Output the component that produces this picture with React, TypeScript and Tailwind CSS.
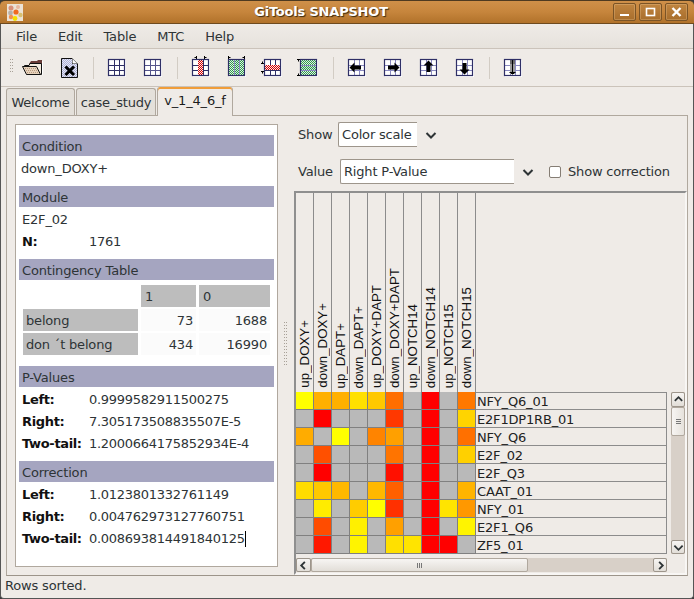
import React from "react";

const NAVY = "#2f2f66";

function Grid({ children, inner = NAVY }: { children?: React.ReactNode; inner?: string }) {
  return (
    <svg width="18" height="18" viewBox="0 0 18 18" className="overflow-visible">
      <rect x="1" y="1" width="17" height="17" fill="#ffffff" />
      <rect x="0.5" y="0.5" width="16" height="16" fill="#ffffff" />
      <path d="M6.5 1V16M11.5 1V16M1 6.5H16M1 11.5H16" stroke={inner} strokeWidth="1" />
      {children}
      <rect x="0.5" y="0.5" width="16" height="16" fill="none" stroke={NAVY} strokeWidth="1.2" />
    </svg>
  );
}

function Checker({ x, y, w, h, c1, c2 }: { x: number; y: number; w: number; h: number; c1: string; c2: string }) {
  const cells: React.ReactNode[] = [];
  for (let i = 0; i < w; i++)
    for (let j = 0; j < h; j++)
      cells.push(<rect key={i + "-" + j} x={x + i} y={y + j} width="1" height="1" fill={(i + j) % 2 ? c1 : c2} />);
  return <>{cells}</>;
}

function ArrowIcon({ dir }: { dir: "l" | "r" | "u" | "d" }) {
  const p = {
    l: "M1.5 8.5L6.5 3.5V6.5H13V10.5H6.5V13.5Z",
    r: "M15.5 8.5L10.5 3.5V6.5H4V10.5H10.5V13.5Z",
    u: "M8.5 1.5L3.5 6.5H6.5V13H10.5V6.5H13.5Z",
    d: "M8.5 15.5L3.5 10.5H6.5V4H10.5V10.5H13.5Z",
  }[dir];
  return (
    <Grid inner="#8a8ac0">
      <path d={p} fill="#000" />
    </Grid>
  );
}

const toolIcons1 = (
  <svg width="22" height="18" viewBox="0 0 22 18">
    <path d="M7 5L9 2H15L16 1H20V15H17Z" fill="#6a3c38" />
    <path d="M2.5 6.5H7L8 4.5H19.5V15.5H5Z" fill="#f4ece0" stroke="#111" strokeWidth="1" />
    <path d="M0.5 7.5H14.5L18.5 15.5H4.5Z" fill="#e6d2bc" stroke="#111" strokeWidth="1" />
    <path d="M3 9.5L15 9.5M4 11.5L16 11.5M5 13.5L17 13.5" stroke="#b89a80" strokeDasharray="1 1" />
    <path d="M20.5 2V16" stroke="#fff" />
  </svg>
);

const toolIcons2 = (
  <svg width="17" height="20" viewBox="0 0 17 20">
    <path d="M0.5 0.5H11L16.5 6V19.5H0.5Z" fill="#c5c8e4" stroke="#111" />
    <path d="M11 0.5V6H16.5" fill="#fff" stroke="#111" />
    <Checker x={1} y={1} w={10} h={18} c1="#e4e6f6" c2="#aeb0d4" />
    <Checker x={11} y={6} w={5} h={13} c1="#e4e6f6" c2="#aeb0d4" />
    <path d="M4.5 8.5L13 17M13 8.5L4.5 17" stroke="#000" strokeWidth="3" />
  </svg>
);

const Btn = ({ children }: { children: React.ReactNode }) => (
  <div className="w-9 h-9 flex items-center justify-center shrink-0">{children}</div>
);
const Sep = () => (
  <div className="w-3 flex justify-center shrink-0">
    <div className="w-px h-[22px] bg-[#d2ccc4]" />
  </div>
);

function Chevron({ dir = "d", size = 12, width = 2 }: { dir?: "d" | "u" | "l" | "r"; size?: number; width?: number }) {
  const d = { d: "M1.5 4L6 8.5L10.5 4", u: "M2 7.5L6 3.5L10 7.5", l: "M7.5 2L3.5 6L7.5 10", r: "M4.5 2L8.5 6L4.5 10" }[dir];
  return (
    <svg width={size} height={size} viewBox="0 0 12 12">
      <path d={d} fill="none" stroke="#2e3436" strokeWidth={width} />
    </svg>
  );
}

function Section({ title, first, children }: { title: string; first?: boolean; children: React.ReactNode }) {
  return (
    <div className={first ? "" : "mt-[7px]"}>
      <div className="h-[21px] leading-[23px] bg-[#a5a5c0] px-[3px] text-[#2e3436]">{title}</div>
      {children}
    </div>
  );
}

function KV({ k, v, caret }: { k: string; v?: string; caret?: boolean }) {
  return (
    <div className="h-[22px] pt-px flex items-center px-[3px]">
      <div className="w-[67px] font-bold shrink-0 text-[#111] tracking-[-0.35px]">{k}</div>
      <div className="flex items-center tracking-[-0.28px]">
        {v}
        {caret && <span className="inline-block w-px h-[16px] bg-black" />}
      </div>
    </div>
  );
}

const G = "#b9b9b9";
const R = "#ff0000";
const rows: [string, string[]][] = [
  ["NFY_Q6_01", ["#ffff00", "#ffb000", "#ffb000", "#ffe000", "#ffc800", "#ff6e00", G, R, G, "#ff7800"]],
  ["E2F1DP1RB_01", [G, R, G, G, G, "#ff3800", G, R, G, "#ffd400"]],
  ["NFY_Q6", ["#ffac00", G, "#ffff00", G, "#ff8400", "#ffa000", G, R, G, "#ff7000"]],
  ["E2F_02", [G, "#ff5000", G, G, G, "#ff7400", G, R, G, "#ffd000"]],
  ["E2F_Q3", [G, R, G, G, G, "#ff1000", G, R, G, G]],
  ["CAAT_01", ["#ffdc00", "#ffc800", "#ffb800", G, "#ffb800", "#ff6000", G, R, G, "#ffb400"]],
  ["NFY_01", [G, "#ffec00", G, "#ffcc00", "#ffff00", "#ff3000", G, R, "#ffe400", "#ff9800"]],
  ["E2F1_Q6", [G, "#ff4c00", G, "#fff000", G, "#ffa000", G, R, G, "#fff400"]],
  ["ZF5_01", [G, "#ff1800", G, "#fff400", G, "#ffe000", "#ffe400", R, R, G]],
];
const cols = ["up_DOXY+", "down_DOXY+", "up_DAPT+", "down_DAPT+", "up_DOXY+DAPT", "down_DOXY+DAPT", "up_NOTCH14", "down_NOTCH14", "up_NOTCH15", "down_NOTCH15"];

const Dots = ({ w, h }: { w: number; h: number }) => (
  <svg width={w} height={h} viewBox={`0 0 ${w} ${h}`}>
    {Array.from({ length: Math.floor(h / 3) }).flatMap((_, j) =>
      Array.from({ length: Math.floor(w / 2) }).map((_, i) => (
        <rect key={i + "-" + j} x={i * 2} y={j * 3} width="1" height="1" fill="#a8a198" />
      ))
    )}
  </svg>
);

const ScrollBtn = ({ children, cls }: { children: React.ReactNode; cls: string }) => (
  <div className={"flex items-center justify-center bg-gradient-to-b from-[#f7f5f3] to-[#e2ded8] border border-[#9d958b] rounded-[2px] shrink-0 " + cls}>
    {children}
  </div>
);

const TICK = "#000";

export default function App() {
  return (
    <div className="w-[694px] h-[599px] flex flex-col overflow-hidden bg-[#3a3a3a] text-[13px] tracking-[-0.18px] text-[#2e3436] [font-family:'DejaVu_Sans',sans-serif]">
      {/* title bar */}
      <div className="h-[24px] shrink-0 rounded-t-[5px] border-t border-[#4e3a20] border-b border-b-[#6e4a1e] bg-gradient-to-b from-[#cf9049] via-[#c6853c] to-[#b1722a] flex items-center pl-[7px] pr-[6px]">
        <svg width="16" height="17" viewBox="0 0 16 17" className="shrink-0">
          <rect width="16" height="17" fill="#ece3d6" />
          <circle cx="4" cy="4" r="2.5" fill="#d8907a" />
          <circle cx="11" cy="3" r="2" fill="#e8b8a0" />
          <circle cx="3.5" cy="9" r="2.4" fill="#b8b0a8" />
          <circle cx="9" cy="8" r="2.6" fill="#f06a20" />
          <circle cx="13.5" cy="11" r="2.2" fill="#d8c070" />
          <circle cx="4" cy="13" r="2.2" fill="#f09050" />
          <circle cx="8" cy="14.5" r="2.4" fill="#f4e000" />
        </svg>
        <div className="flex-1 text-center text-white font-bold text-[13px] tracking-[-0.2px] [text-shadow:1px_1px_1px_#3a2a10] pl-[6px]">GiTools SNAPSHOT</div>
        <div className="flex gap-[3px]">
          {[
            <path key="a" d="M7 12H16" stroke="#fff" strokeWidth="2" />,
            <rect key="b" x="7.5" y="5.5" width="8" height="7" fill="none" stroke="#fff" strokeWidth="1.6" />,
            <path key="c" d="M7.5 5L15.5 13M15.5 5L7.5 13" stroke="#fff" strokeWidth="2.4" />,
          ].map((c, i) => (
            <div key={i} className="w-[23px] h-[18px] rounded-[2px] border border-[#7b5426] bg-gradient-to-b from-[#c08540] to-[#a86e2c] shadow-[inset_0_0_0_1px_rgba(255,220,170,0.25)]">
              <svg width="21" height="16" viewBox="1 1 21 16">{c}</svg>
            </div>
          ))}
        </div>
      </div>

      <div className="flex-1 min-h-0 flex flex-col bg-[#efebe7] border-x border-[#555] rounded-b-[4px] border-b">
        {/* menu */}
        <div className="h-[25px] shrink-0 bg-gradient-to-b from-[#efebe7] to-[#e6e2dc] border-b border-[#cbc3ba] flex items-center gap-[21px] pl-[15px] pt-[1px] pr-[2px]">
          <span>File</span>
          <span>Edit</span>
          <span>Table</span>
          <span>MTC</span>
          <span>Help</span>
        </div>

        {/* toolbar */}
        <div className="h-[38px] shrink-0 border-b border-[#cbc3ba] flex items-center pl-[5px]">
          <div className="w-[9px] flex justify-center shrink-0 pl-[3px]"><Dots w={5} h={17} /></div>
          <Btn>{toolIcons1}</Btn>
          <Btn>{toolIcons2}</Btn>
          <Sep />
          <Btn><Grid /></Btn>
          <Btn><Grid inner="#55558c" /></Btn>
          <Sep />
          <Btn>
            <Grid inner={NAVY}>
              <Checker x={6} y={1} w={5} h={15} c1="#d40000" c2="#fbe8e8" />
              <path d="M4.5 -3V0M2.5 -1.5H4.5M12.5 -3V0M12.5 -1.5H14.5" stroke={TICK} />
            </Grid>
          </Btn>
          <Btn>
            <Grid inner="#8a8ac0">
              <Checker x={1} y={1} w={5} h={15} c1="#2f9a50" c2="#e2f2e2" />
              <Checker x={7} y={1} w={4} h={15} c1="#2f9a50" c2="#cfe6d8" />
              <Checker x={12} y={1} w={4} h={15} c1="#2f9a50" c2="#e2f2e2" />
              <path d="M0.5 -3V0M0.5 -1.5H2.5M16.5 -3V0M14.5 -1.5H16.5" stroke={TICK} />
            </Grid>
          </Btn>
          <Btn>
            <Grid inner={NAVY}>
              <Checker x={1} y={6} w={15} h={5} c1="#d40000" c2="#fbe8e8" />
              <path d="M-3 4.5H0M-1.5 2.5V4.5M-3 12.5H0M-1.5 12.5V14.5" stroke={TICK} />
            </Grid>
          </Btn>
          <Btn>
            <Grid inner="#8a8ac0">
              <Checker x={1} y={1} w={15} h={5} c1="#2f9a50" c2="#e2f2e2" />
              <Checker x={1} y={7} w={15} h={4} c1="#2f9a50" c2="#cfe6d8" />
              <Checker x={1} y={12} w={15} h={4} c1="#2f9a50" c2="#e2f2e2" />
              <path d="M-3 0.5H0M-1.5 0.5V2.5M-3 16.5H0M-1.5 14.5V16.5" stroke={TICK} />
            </Grid>
          </Btn>
          <Sep />
          <Btn><ArrowIcon dir="l" /></Btn>
          <Btn><ArrowIcon dir="r" /></Btn>
          <Btn><ArrowIcon dir="u" /></Btn>
          <Btn><ArrowIcon dir="d" /></Btn>
          <Sep />
          <Btn>
            <Grid inner="#8a8ac0">
              <rect x="6" y="1" width="5" height="14" fill="#9a9a9a" />
              <rect x="6" y="1" width="5" height="4" fill="#6a6a6a" />
              <path d="M8.5 1V15.5M5.5 13.5H11.5M7 14.5H10" stroke="#000" fill="none" />
            </Grid>
          </Btn>
        </div>

        {/* tabs */}
        <div className="h-[28px] shrink-0 flex items-end pl-[5px] gap-[2px] relative z-10">
          <div className="w-[69px] h-[27px] pt-px flex items-center justify-center bg-[#e4e0da] border border-b-0 border-[#b0a89e] rounded-t-[3px]">Welcome</div>
          <div className="w-[80px] h-[27px] pt-px flex items-center justify-center bg-[#e4e0da] border border-b-0 border-[#b0a89e] rounded-t-[3px] -ml-px">case_study</div>
          <div className="w-[76px] h-[29px] -mb-px -ml-[1px] pb-[2px] flex items-center justify-center bg-[#efebe7] border border-t-0 border-b-0 border-[#b0a89e] rounded-t-[3px] shadow-[inset_0_2px_0_#f09d3a] text-[#1a1a1a]">v_1_4_6_f</div>
        </div>

        {/* tab content */}
        <div className="h-[461px] shrink-0 mx-[5px] border border-[#b0a89e] border-b-[#9c948a] flex">
          {/* left */}
          <div className="w-[263px] h-[443px] ml-2 mt-2 shrink-0 bg-white border border-[#b0a89e] pt-[10px] px-[3px]">
            <Section title="Condition" first>
              <div className="h-[22px] mt-px pt-px flex items-center px-[2px]">down_DOXY+</div>
            </Section>
            <Section title="Module">
              <div className="mt-px">
                <div className="h-[22px] pt-px flex items-center px-[3px]">E2F_02</div>
                <KV k="N:" v="1761" />
              </div>
            </Section>
            <Section title="Contingency Table">
              <div className="pt-[5px] pb-[4px] ml-[4px] grid grid-cols-[115px_55px_71px] gap-x-[3px] gap-y-[2px] auto-rows-[22px] items-stretch leading-[24px]">
                <div />
                <div className="bg-[#bdbdbd] px-[4px]">1</div>
                <div className="bg-[#bdbdbd] px-[4px]">0</div>
                <div className="bg-[#bdbdbd] px-[3px]">belong</div>
                <div className="bg-[#fbfbfb] px-[3px] text-right">73</div>
                <div className="bg-[#fbfbfb] px-[3px] text-right">1688</div>
                <div className="bg-[#bdbdbd] px-[3px]">don ´t belong</div>
                <div className="bg-[#fbfbfb] px-[3px] text-right">434</div>
                <div className="bg-[#fbfbfb] px-[3px] text-right">16990</div>
              </div>
            </Section>
            <Section title="P-Values">
              <div className="mt-px">
                <KV k="Left:" v="0.9999582911500275" />
                <KV k="Right:" v="7.305173508835507E-5" />
                <KV k="Two-tail:" v="1.2000664175852934E-4" />
              </div>
            </Section>
            <Section title="Correction">
              <div className="mt-px">
                <KV k="Left:" v="1.0123801332761149" />
                <KV k="Right:" v="0.004762973127760751" />
                <KV k="Two-tail:" v="0.008693814491840125" caret />
              </div>
            </Section>
          </div>

          {/* splitter */}
          <div className="w-[16px] shrink-0 flex items-center justify-center pt-[8px] pb-[10px]">
            <Dots w={5} h={46} />
          </div>

          {/* right */}
          <div className="flex-1 min-w-0 flex flex-col">
            <div className="h-[75px] shrink-0 pl-[4px]">
              <div className="h-[25px] mt-[6px] flex items-center">
                <span className="w-[40px]">Show</span>
                <div className="w-[79px] h-[25px] bg-white border border-r-0 border-[#9d958b] rounded-l-[2px] flex items-center pl-[3px]">Color scale</div>
                <div className="w-[28px] flex justify-center"><Chevron /></div>
              </div>
              <div className="h-[25px] mt-[12px] flex items-center">
                <span className="w-[42px]">Value</span>
                <div className="w-[174px] h-[25px] bg-white border border-r-0 border-[#9d958b] rounded-l-[2px] flex items-center pl-[3px]">Right P-Value</div>
                <div className="w-[28px] flex justify-center"><Chevron /></div>
                <div className="w-[12px] h-[12px] ml-[7px] bg-white border border-[#857d74] rounded-[2px]" />
                <span className="ml-[7px]">Show correction</span>
              </div>
            </div>

            {/* matrix */}
            <div className="flex-1 min-h-0 border-2 border-[#8f8f8f] border-r-[#f8f6f4] border-b-[#f8f6f4] flex flex-col">
              <div className="h-[199px] shrink-0 flex">
                {cols.map((c) => (
                  <div key={c} className="w-[18px] border-r border-[#8c8c8c] flex items-end justify-center pb-[4px]">
                    <span className="[writing-mode:vertical-rl] rotate-180 whitespace-nowrap [font-family:'Liberation_Sans',sans-serif] text-[13.3px] tracking-normal leading-[16px] text-[#111]">{c}</span>
                  </div>
                ))}
              </div>
              <div className="h-[162px] shrink-0 flex">
                <div className="grid grid-cols-[repeat(10,18px)_191px] auto-rows-[18px] w-[371px] shrink-0">
                  {rows.flatMap(([name, cs], r) => [
                    ...cs.map((col, i) => (
                      <div key={name + i} className="border-r border-b border-[#808080]" style={{ backgroundColor: col }} />
                    )),
                    <div key={name} className={"border-r border-b border-[#8c8c8c] pl-[1px] leading-[19px] text-[#222] " + (r === 0 ? "shadow-[inset_0_1px_0_#8c8c8c]" : "")}>{name}</div>,
                  ])}
                </div>
                <div className="w-[14px] ml-[4px] shrink-0 flex flex-col bg-[#d8d0c8]">
                  <ScrollBtn cls="h-[15px]"><Chevron dir="u" size={11} /></ScrollBtn>
                  <div className="h-[29px] bg-gradient-to-r from-[#f7f5f3] to-[#e6e2dc] border border-[#b0a89e] rounded-[2px] flex flex-col items-center justify-center gap-[1px]">
                    <div className="w-[5px] h-px bg-[#777]" />
                    <div className="w-[5px] h-px bg-[#777]" />
                    <div className="w-[5px] h-px bg-[#777]" />
                  </div>
                  <div className="flex-1" />
                  <ScrollBtn cls="h-[14px]"><Chevron dir="d" size={11} /></ScrollBtn>
                </div>
              </div>
              <div className="h-[14px] w-[371px] mt-[4px] shrink-0 flex bg-[#d8d0c8]">
                <ScrollBtn cls="w-[15px]"><Chevron dir="l" size={11} /></ScrollBtn>
                <div className="w-[217px] bg-gradient-to-b from-[#f7f5f3] to-[#e2ded8] border border-[#b0a89e] rounded-[2px] flex items-center justify-center gap-[1px]">
                  <div className="w-px h-[5px] bg-[#777]" />
                  <div className="w-px h-[5px] bg-[#777]" />
                  <div className="w-px h-[5px] bg-[#777]" />
                </div>
                <div className="flex-1" />
                <ScrollBtn cls="w-[14px]"><Chevron dir="r" size={11} /></ScrollBtn>
              </div>
            </div>
          </div>
        </div>

        {/* status */}
        <div className="flex-1 flex items-center pl-[4px] pb-[2px]">Rows sorted.</div>
      </div>
    </div>
  );
}
